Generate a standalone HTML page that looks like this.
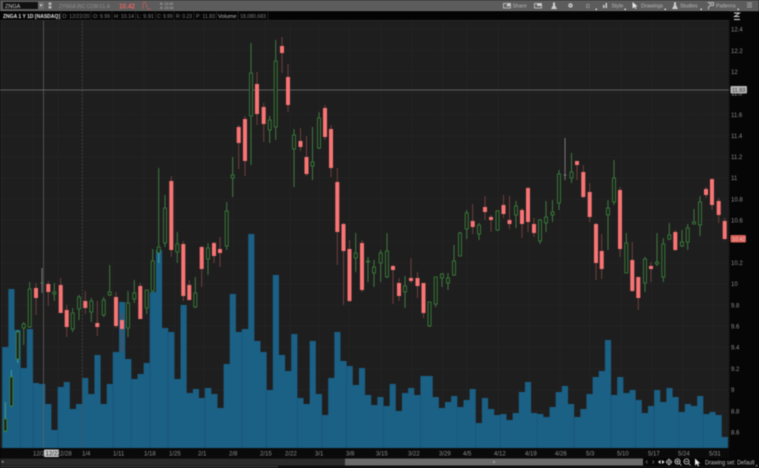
<!DOCTYPE html>
<html><head><meta charset="utf-8"><title>ZNGA</title>
<style>
html,body{margin:0;padding:0;background:#000;width:759px;height:468px;overflow:hidden}
svg{display:block;filter:blur(.5px)}
text{font-family:"Liberation Sans",sans-serif;font-size:6px;fill:#8f8f8f}
</style></head><body>
<svg width="759" height="468" viewBox="0 0 759 468" xmlns="http://www.w3.org/2000/svg">
<rect width="759" height="468" fill="#060606"/>
<rect x="0" y="20" width="728.5" height="428" fill="#1e1e1e"/>
<!-- grid -->
<path stroke="#292929" stroke-width=".7" stroke-dasharray="1.2 1" fill="none" d="M0 29H728M0 50.5H728M0 71.5H728M0 93H728M0 114.5H728M0 136H728M0 157H728M0 178H728M0 199H728M0 220H728M0 241.5H728M0 263H728M0 284H728M0 305H728M0 326H728M0 347H728M0 369H728M0 390H728M0 411H728M0 432H728"/>
<path stroke="#292929" stroke-width=".7" stroke-dasharray="1.2 1" fill="none" d="M2 20V448M33 20V448M58 20V448M113 20V448M144 20V448M175 20V448M204 20V448M233 20V448M265 20V448M290 20V448M319 20V448M349 20V448M381 20V448M412 20V448M443 20V448M467 20V448M498 20V448M529 20V448M560 20V448M590 20V448M621 20V448M652 20V448M683 20V448M713 20V448"/>
<!-- volume -->
<path fill="#1b6085" d="M2.2 448V347H8.35V289H14.5V330H20.65V368H26.8V329H32.95V383H39.1V384H45.25V404H51.4V430H57.55V387H63.7V382H69.85V409H76V404H82.15V378H88.3V394H94.45V355H100.6V404H106.75V384H112.9V352H119.05V302H125.2V359H131.35V379H137.5V374H143.65V363H149.8V292H155.95V250H162.1V328H168.25V332H174.4V379H180.55V305H186.7V393H192.85V389H199V398H205.15V388H211.3V394H217.45V408H223.6V364H229.75V294H235.9V332H242.05V329H248.2V234H254.35V341H260.5V352H266.65V390H272.8V275H278.95V355H285.1V371H291.25V334H297.4V398H303.55V404H309.7V341H315.85V394H322V415H328.15V378H334.3V332H340.45V361H346.6V366H352.75V385H358.9V368H365.05V395H371.2V405H377.35V397H383.5V406H389.65V384H395.8V411H401.95V393H408.1V388H414.25V395H420.4V376H432.7V397H438.85V408H445V402H451.15V396H457.3V407H463.45V400H469.6V389H475.75V423H481.9V398H488.05V409H494.2V415H500.35V414H506.5V420H512.65V413H518.8V392H524.95V382H531.1V413H537.25V414H543.4V417H549.55V407H555.7V392H561.85V386H568V404H574.15V417H580.3V409H586.45V394H592.6V377H598.75V371H604.9V340H611.05V395H617.2V377H623.35V393H629.5V390H635.65V400H641.8V413H647.95V406H654.1V390H660.25V402H666.4V388H672.55V397H678.7V412H684.85V404H691V406H697.15V396H703.3V414H709.45V412H715.6V415H721.75V437H727.9V448Z"/>
<path stroke="#17557a" stroke-width=".7" fill="none" d="M20.6 448V368M33 448V383M58 448V387M113 448V352M131.3 448V379M150 448V292M168 448V332M205 448V388M242 448V329M266.6 448V390M297.4 448V398M322 448V415M346.6 448V366M383.5 448V406M420.4 448V395M457.3 448V407M475.7 448V423M500.3 448V415M537.2 448V414M574 448V417M611 448V395M635.6 448V400M654 448V406M678.7 448V412M703.3 448V414"/>
<!-- crosshair and separators -->
<path stroke="#666" stroke-width=".7" fill="none" d="M43.5 20V448"/>
<path stroke="#505050" stroke-width=".7" stroke-dasharray="2 1.5" fill="none" d="M82.3 20V448"/>
<path stroke="#767676" stroke-width=".7" fill="none" d="M0 90H729"/>
<!-- green wicks -->
<g style="mix-blend-mode:screen">
<path stroke="#2c722d" stroke-width=".9" fill="none" d="M5.3 402V432M11.3 370V407M17.7 330V363M23.7 322V345M29.7 282V328M54.3 283V301M72.7 308V332M79 295V320M91.3 298V322M103.7 297V317M109.7 265V296M128 291V337M134.3 280V303M146.7 290V314M152.7 249V292M158.7 168V263M165 195V247M177.3 232V263M195.3 277V308M208 243V275M226.7 202V250M232.7 157V197M251 43V165M269.7 116V143M275.7 40V140M294 129V187M312.5 127V180M319 112V149M355.7 233V272M368 257V282M374 260V287M380.7 250V282M387 233V278M405 276V308M429.5 302V327M435.7 277V307M442 273V287M448 273V290M454 245V276M460 232V256M466.7 210V239M479 223V240M497.5 210V231M516 201V228M540 219V244M546 201V232M552.5 200V222M559 170V210M571.5 153V183M608 200V250M614 160V205M626.3 233V273M645 257V292M657 233V266M663.3 238V282M669.3 223V240M682 230V247M687.7 224V250M694 209V224M700 196V236"/>
</g>
<!-- hollow interior of green bodies -->
<path fill="#1e1e1e" d="M3.8 419h3v12h-3zM9.8 377h3v29h-3zM16.2 332h3v27h-3zM22.2 324h3v4h-3zM28.2 289h3v38h-3zM52.8 292h3v2h-3zM71.2 313h3v16h-3zM77.5 297h3v12h-3zM89.8 301h3v11h-3zM102.2 300h3v15h-3zM108.2 292h3v3h-3zM126.5 303h3v25h-3zM132.8 293h3v6h-3zM145.2 290h3v18h-3zM151.2 261h3v30h-3zM157.2 247h3v6h-3zM163.5 208h3v35h-3zM175.8 244h3v8h-3zM193.8 293h3v14h-3zM206.5 248h3v11h-3zM225.2 211h3v35h-3zM231.2 175h3v3h-3zM249.5 73h3v43h-3zM268.2 120h3v10h-3zM274.2 61h3v66h-3zM292.5 135h3v14h-3zM311 162h3v4h-3zM317.5 118h3v30h-3zM354.2 253h3v5h-3zM366.5 261h3v1h-3zM372.5 267h3v6h-3zM379.2 253h3v10h-3zM385.5 251h3v26h-3zM403.5 286h3v6h-3zM428 302h3v24h-3zM434.2 277h3v27h-3zM440.5 274h3v4h-3zM446.5 278h3v5h-3zM452.5 261h3v14h-3zM458.5 233h3v23h-3zM465.2 213h3v16h-3zM477.5 225h3v9h-3zM496 211h3v19h-3zM514.5 206h3v9h-3zM538.5 220h3v21h-3zM544.5 217h3v6h-3zM551 212h3v3h-3zM557.5 174h3v29h-3zM570 172h3v6h-3zM606.5 208h3v7h-3zM612.5 178h3v24h-3zM624.8 243h3v30h-3zM643.5 259h3v24h-3zM655.5 262h3v2h-3zM661.8 244h3v33h-3zM667.8 235h3v4h-3zM680.5 242h3v4h-3zM686.2 228h3v14h-3zM692.5 222h3v2h-3zM698.5 202h3v23h-3z"/>
<path stroke="#3a873b" stroke-width=".85" fill="none" d="M3.8 419h3v12h-3zM9.8 377h3v29h-3zM16.2 332h3v27h-3zM22.2 324h3v4h-3zM28.2 289h3v38h-3zM52.8 292h3v2h-3zM71.2 313h3v16h-3zM77.5 297h3v12h-3zM89.8 301h3v11h-3zM102.2 300h3v15h-3zM108.2 292h3v3h-3zM126.5 303h3v25h-3zM132.8 293h3v6h-3zM145.2 290h3v18h-3zM151.2 261h3v30h-3zM157.2 247h3v6h-3zM163.5 208h3v35h-3zM175.8 244h3v8h-3zM193.8 293h3v14h-3zM206.5 248h3v11h-3zM225.2 211h3v35h-3zM231.2 175h3v3h-3zM249.5 73h3v43h-3zM268.2 120h3v10h-3zM274.2 61h3v66h-3zM292.5 135h3v14h-3zM311 162h3v4h-3zM317.5 118h3v30h-3zM354.2 253h3v5h-3zM366.5 261h3v1h-3zM372.5 267h3v6h-3zM379.2 253h3v10h-3zM385.5 251h3v26h-3zM403.5 286h3v6h-3zM428 302h3v24h-3zM434.2 277h3v27h-3zM440.5 274h3v4h-3zM446.5 278h3v5h-3zM452.5 261h3v14h-3zM458.5 233h3v23h-3zM465.2 213h3v16h-3zM477.5 225h3v9h-3zM496 211h3v19h-3zM514.5 206h3v9h-3zM538.5 220h3v21h-3zM544.5 217h3v6h-3zM551 212h3v3h-3zM557.5 174h3v29h-3zM570 172h3v6h-3zM606.5 208h3v7h-3zM612.5 178h3v24h-3zM624.8 243h3v30h-3zM643.5 259h3v24h-3zM655.5 262h3v2h-3zM661.8 244h3v33h-3zM667.8 235h3v4h-3zM680.5 242h3v4h-3zM686.2 228h3v14h-3zM692.5 222h3v2h-3zM698.5 202h3v23h-3z"/>
<!-- grey candles -->
<path stroke="#777" stroke-width="1" fill="none" d="M42 268V293M565 138V180M563.5 175H566.5"/>
<path stroke="#3a873b" stroke-width=".9" fill="none" d="M40.5 283h3"/>
<!-- red wicks -->
<path stroke="#774341" stroke-width=".9" fill="none" d="M36 283V315M48.3 281V306M60.7 278V313M66.7 305V337M85.3 291V314M97.3 301V336M116 292V328M122 313V352M140.3 283V319M171.3 176V257M183.3 241V301M189.3 280V300M201.7 246V287M214 242V263M220 237V267M238.7 125V169M245 116V176M257 72V125M263.7 103V142M282 37V73M288 64V112M300.5 128V151M306.5 136V176M325 105V140M331 125V177M337.3 168V265M343.5 223V305M349.5 240V302M362 240V292M393 265V304M399 278V301M411 258V283M417.5 272V298M423.5 283V318M472.7 204V234M485 196V220M491 215V232M503.5 195V218M509.5 196V229M522 208V238M528 187V232M534 218V237M577 161V180M583.3 165V198M589.7 183V222M596 223V280M601.7 234V279M620 187V257M632.3 242V292M638.3 277V310M651 262V282M675.3 230V251M706 187V198M712 179V210M718.7 198V223M724.7 218V240"/>
<!-- red bodies -->
<path fill="#f97474" d="M34 288h4v10h-4zM46.3 284h4v8h-4zM58.7 285h4v28h-4zM64.7 310h4v17h-4zM83.3 301h4v7h-4zM95.3 323h4v4h-4zM114 297h4v29h-4zM120 320h4v9h-4zM138.3 286h4v33h-4zM169.3 181h4v69h-4zM181.3 244h4v52h-4zM187.3 285h4v15h-4zM199.7 247h4v22h-4zM212 243h4v13h-4zM218 249h4v4h-4zM236.7 127h4v16h-4zM243 119h4v42h-4zM255 84h4v30h-4zM261.7 107h4v17h-4zM280 46h4v7h-4zM286 77h4v28h-4zM298.5 141h4v6h-4zM304.5 157h4v17h-4zM323 108h4v29h-4zM329 129h4v39h-4zM335.3 182h4v50h-4zM341.5 224h4v27h-4zM347.5 249h4v52h-4zM360 243h4v47h-4zM391 266h4v4h-4zM397 283h4v13h-4zM409 278h4v3h-4zM415.5 278h4v8h-4zM421.5 283h4v30h-4zM470.7 221h4v6h-4zM483 207h4v5h-4zM489 217h4v3h-4zM501.5 205h4v9h-4zM507.5 220h4v4h-4zM520 210h4v14h-4zM526 188h4v34h-4zM532 224h4v9h-4zM575 161h4v4h-4zM581.3 172h4v25h-4zM587.7 192h4v25h-4zM594 224h4v39h-4zM599.7 251h4v18h-4zM618 190h4v59h-4zM630.3 260h4v31h-4zM636.3 277h4v21h-4zM649 266h4v3h-4zM673.3 232h4v18h-4zM704 189h4v6h-4zM710 179h4v26h-4zM716.7 201h4v14h-4zM722.7 221h4v18h-4z"/>
<!-- top toolbar -->
<rect width="759" height="10.5" fill="#5c5c5c"/>
<rect x="0" y="10.5" width="759" height=".6" fill="#777"/>
<rect x="3" y="2" width="36" height="7" fill="#111"/>
<rect x="38" y="2" width="6" height="7" fill="#6e6e6e"/>
<path d="M39.5 4.5h3l-1.5 2z" fill="#ddd"/>
<text x="5" y="7.8" style="font-size:5.5px;fill:#ccc">ZNGA</text>
<path d="M48.5 2.5h3v2.5h-3zM48.5 6h3v2.5h-3z" fill="#b5b5b5"/>
<text x="59" y="7.8" textLength="51" lengthAdjust="spacingAndGlyphs" style="font-size:5.5px;fill:#909090">ZYNGA INC COM CL A</text>
<text x="119" y="8.3" textLength="16" lengthAdjust="spacingAndGlyphs" style="font-size:7px;font-weight:bold;fill:#e06460">10.42</text>
<path d="M143 9V4q0-2 1.5-2t2 3.5 1.500 3.500h3" stroke="#c65a58" stroke-width=".8" fill="none"/>
<text x="160" y="4.8" style="font-size:3.6px;fill:#bbb">B: 10.42</text>
<text x="160" y="9" style="font-size:3.6px;fill:#bbb">A: 10.43</text>
<!-- right toolbar -->
<g fill="#cfcfcf">
<path d="M503.5 3.5h7v4.500h-7z" fill="none" stroke="#cfcfcf" stroke-width=".8"/><path d="M506 6l2.500-3 2.500 1.500-2 2z"/>
<text x="512.5" y="7.7" style="font-size:5.3px;fill:#b8b8b8">Share</text>
<path d="M534.5 3.5h7v4.500h-7z" fill="none" stroke="#cfcfcf" stroke-width=".8"/><path d="M537 3.5h4.500v2.500h-4.500z"/>
<path d="M553 2.500h2v3l2 3.500h-6l2-3.500z"/>
<circle cx="570.5" cy="5.5" r="2.2"/><circle cx="570.5" cy="5.5" r=".8" fill="#5c5c5c"/>
<text x="586" y="7.8" style="font-size:5.3px;fill:#bdbdbd">D</text>
<rect x="595.5" y="8.6" width="1.4" height="1.4" fill="#eee"/>
<path d="M603 8V5h1.500v3zM605.5 8V3h1.500v5z"/>
<text x="611.5" y="7.7" style="font-size:5.3px;fill:#b8b8b8">Style</text>
<rect x="624.5" y="8.6" width="1.4" height="1.4" fill="#eee"/>
<path d="M632.5 2v6.500l1.800-1.500 1.400 2 .9-.6-1.300-2h2.400z" fill="#e4e4e4"/>
<text x="641" y="7.7" style="font-size:5.3px;fill:#b8b8b8">Drawings</text>
<rect x="664.5" y="8.6" width="1.4" height="1.4" fill="#eee"/>
<path d="M674 2.200h2v3l2 3.800h-6l2-3.800z"/>
<text x="680" y="7.7" style="font-size:5.3px;fill:#b8b8b8">Studies</text>
<rect x="700.5" y="8.6" width="1.4" height="1.4" fill="#eee"/>
<path d="M707.5 2.500h6v3h-3l-2 1.500v2.500M709 4h3" fill="none" stroke="#cfcfcf" stroke-width=".8"/>
<text x="716" y="7.7" style="font-size:5.3px;fill:#b8b8b8">Patterns</text>
<rect x="737.5" y="8.6" width="1.4" height="1.4" fill="#eee"/>
<path d="M747 3h5M747 5h5M747 7h5" stroke="#bbb" stroke-width=".8" fill="none"/>
</g>
<!-- info row -->
<rect x="0" y="11" width="729" height="9" fill="#040404"/>
<path stroke="#2c2c2c" stroke-width=".7" fill="none" d="M0 20.300H728M61 11.500V20M91 11.500V20M112 11.500V20M135.500 11.500V20M155.500 11.500V20M174 11.500V20M194 11.500V20M216.500 11.500V20M238 11.500V20M268 11.500V20"/>
<text x="3" y="18" textLength="57" lengthAdjust="spacingAndGlyphs" style="font-size:5.6px;font-weight:bold;fill:#e4e4e4">ZNGA 1 Y 1D [NASDAQ]</text>
<text x="62.500" y="18" textLength="27" lengthAdjust="spacingAndGlyphs" style="font-size:5.300px;fill:#828282">D: 12/22/20</text>
<text x="93" y="18" textLength="17" lengthAdjust="spacingAndGlyphs" style="font-size:5.300px;fill:#828282">O: 9.99</text>
<text x="114" y="18" textLength="20" lengthAdjust="spacingAndGlyphs" style="font-size:5.300px;fill:#828282">H: 10.14</text>
<text x="137" y="18" textLength="17" lengthAdjust="spacingAndGlyphs" style="font-size:5.300px;fill:#828282">L: 9.91</text>
<text x="157" y="18" textLength="15.500" lengthAdjust="spacingAndGlyphs" style="font-size:5.300px;fill:#828282">C: 9.99</text>
<text x="176" y="18" textLength="16" lengthAdjust="spacingAndGlyphs" style="font-size:5.300px;fill:#828282">R: 0.23</text>
<text x="196" y="18" textLength="19" lengthAdjust="spacingAndGlyphs" style="font-size:5.300px;fill:#828282">P: 11.83</text>
<text x="218" y="18" textLength="18.500" lengthAdjust="spacingAndGlyphs" style="font-size:5.300px;fill:#bbb">Volume</text>
<text x="240" y="18" textLength="26" lengthAdjust="spacingAndGlyphs" style="font-size:5.300px;fill:#828282">18,080,683</text>
<path d="M734 13h5.500l-5 3.500h5M734 19.500h6" stroke="#ddd" stroke-width=".9" fill="none"/>
<!-- price axis -->
<path stroke="#444" stroke-width=".7" stroke-dasharray="1 1.500" fill="none" d="M729 20V448"/>
<text x="731" y="31.500">12.4</text><text x="731" y="53">12.2</text><text x="731" y="74">12</text>
<text x="731" y="95.500">11.8</text><text x="731" y="117">11.6</text><text x="731" y="138">11.4</text><text x="731" y="159">11.2</text><text x="731" y="180">11</text><text x="731" y="201.500">10.8</text><text x="731" y="222.500">10.6</text><text x="731" y="265">10.2</text><text x="731" y="286">10</text><text x="731" y="307.500">9.8</text><text x="731" y="328.500">9.6</text><text x="731" y="349.500">9.4</text><text x="731" y="371">9.2</text><text x="731" y="392">9</text><text x="731" y="413.500">8.8</text><text x="731" y="434.500">8.6</text>
<rect x="730.500" y="86" width="16.500" height="7.500" rx="1" fill="#b5b5b5"/>
<text x="732" y="92" style="font-size:5.500px;fill:#333">11.83</text>
<rect x="730.500" y="235" width="15.500" height="7.500" rx="1" fill="#d9605a"/>
<text x="732" y="241" style="font-size:5.300px;fill:#f3c0bb">10.42</text>
<!-- time axis -->
<rect x="0" y="448" width="729" height="10" fill="#0a0a0a"/>
<text x="33" y="455.500">12/2</text><text x="60" y="455.500">2/28</text><text x="82" y="455.500">1/4</text><text x="113" y="455.500">1/11</text><text x="144" y="455.500">1/18</text><text x="169" y="455.500">1/25</text><text x="198" y="455.500">2/1</text><text x="229" y="455.500">2/8</text><text x="260" y="455.500">2/15</text><text x="285" y="455.500">2/22</text><text x="315" y="455.500">3/1</text><text x="346" y="455.500">3/8</text><text x="376" y="455.500">3/15</text><text x="408" y="455.500">3/22</text><text x="439" y="455.500">3/29</text><text x="463" y="455.500">4/5</text><text x="494" y="455.500">4/12</text><text x="525" y="455.500">4/19</text><text x="555" y="455.500">4/26</text><text x="586" y="455.500">5/3</text><text x="617" y="455.500">5/10</text><text x="648" y="455.500">5/17</text><text x="678" y="455.500">5/24</text><text x="709" y="455.500">5/31</text>
<rect x="44" y="449.500" width="15" height="7.500" rx="1" fill="#c9c9c9"/>
<text x="45.500" y="455.500" style="fill:#222">12/22</text>
<!-- scrollbar -->
<rect x="0" y="458.500" width="643" height="7" fill="#2a2a2a"/>
<rect x="345" y="458.500" width="298" height="7" fill="#6a6a6a"/>
<rect x="2" y="461" width="1.500" height="1.500" fill="#aaa"/>
<rect x="493" y="461" width="2" height="2" fill="#999"/>
<rect x="0" y="466" width="759" height="2" fill="#111"/>
<rect x="0" y="466.300" width="278" height=".8" fill="#555"/>
<!-- bottom controls -->
<path d="M647.500 460.500l-1.500 1.500 1.500 1.500M652.500 460.500l1.500 1.500-1.500 1.500" stroke="#777" stroke-width=".7" fill="none"/>
<path d="M658 462l2.500-2v4zM664.500 462l-2.500-2v4z" fill="#eee"/>
<circle cx="669" cy="462" r="2.300" fill="none" stroke="#ccc" stroke-width=".8"/><path d="M669 458.500v7M665.500 462h7" stroke="#ccc" stroke-width=".6"/>
<circle cx="677.500" cy="461.500" r="2.600" fill="none" stroke="#ddd" stroke-width=".8"/><path d="M679.500 463.500l2 2M676 461.500h3M677.500 460v3" stroke="#ddd" stroke-width=".7"/>
<circle cx="686.500" cy="461.500" r="2.600" fill="none" stroke="#ccc" stroke-width=".8"/><path d="M688.500 463.500l2 2M685 461.500h3" stroke="#ccc" stroke-width=".7"/>
<path d="M695 458.500v7l1.800-1.600 1.300 2.300 1-.6-1.300-2.200h2.400z" fill="#eee"/>
<text x="705" y="464.300" textLength="49.500" lengthAdjust="spacingAndGlyphs" style="font-size:6px;fill:#bdbdbd">Drawing set: Default</text>
<path d="M757 464.500v1.500h-1.500" stroke="#bbb" stroke-width=".6" fill="none"/>
</svg>
</body></html>
